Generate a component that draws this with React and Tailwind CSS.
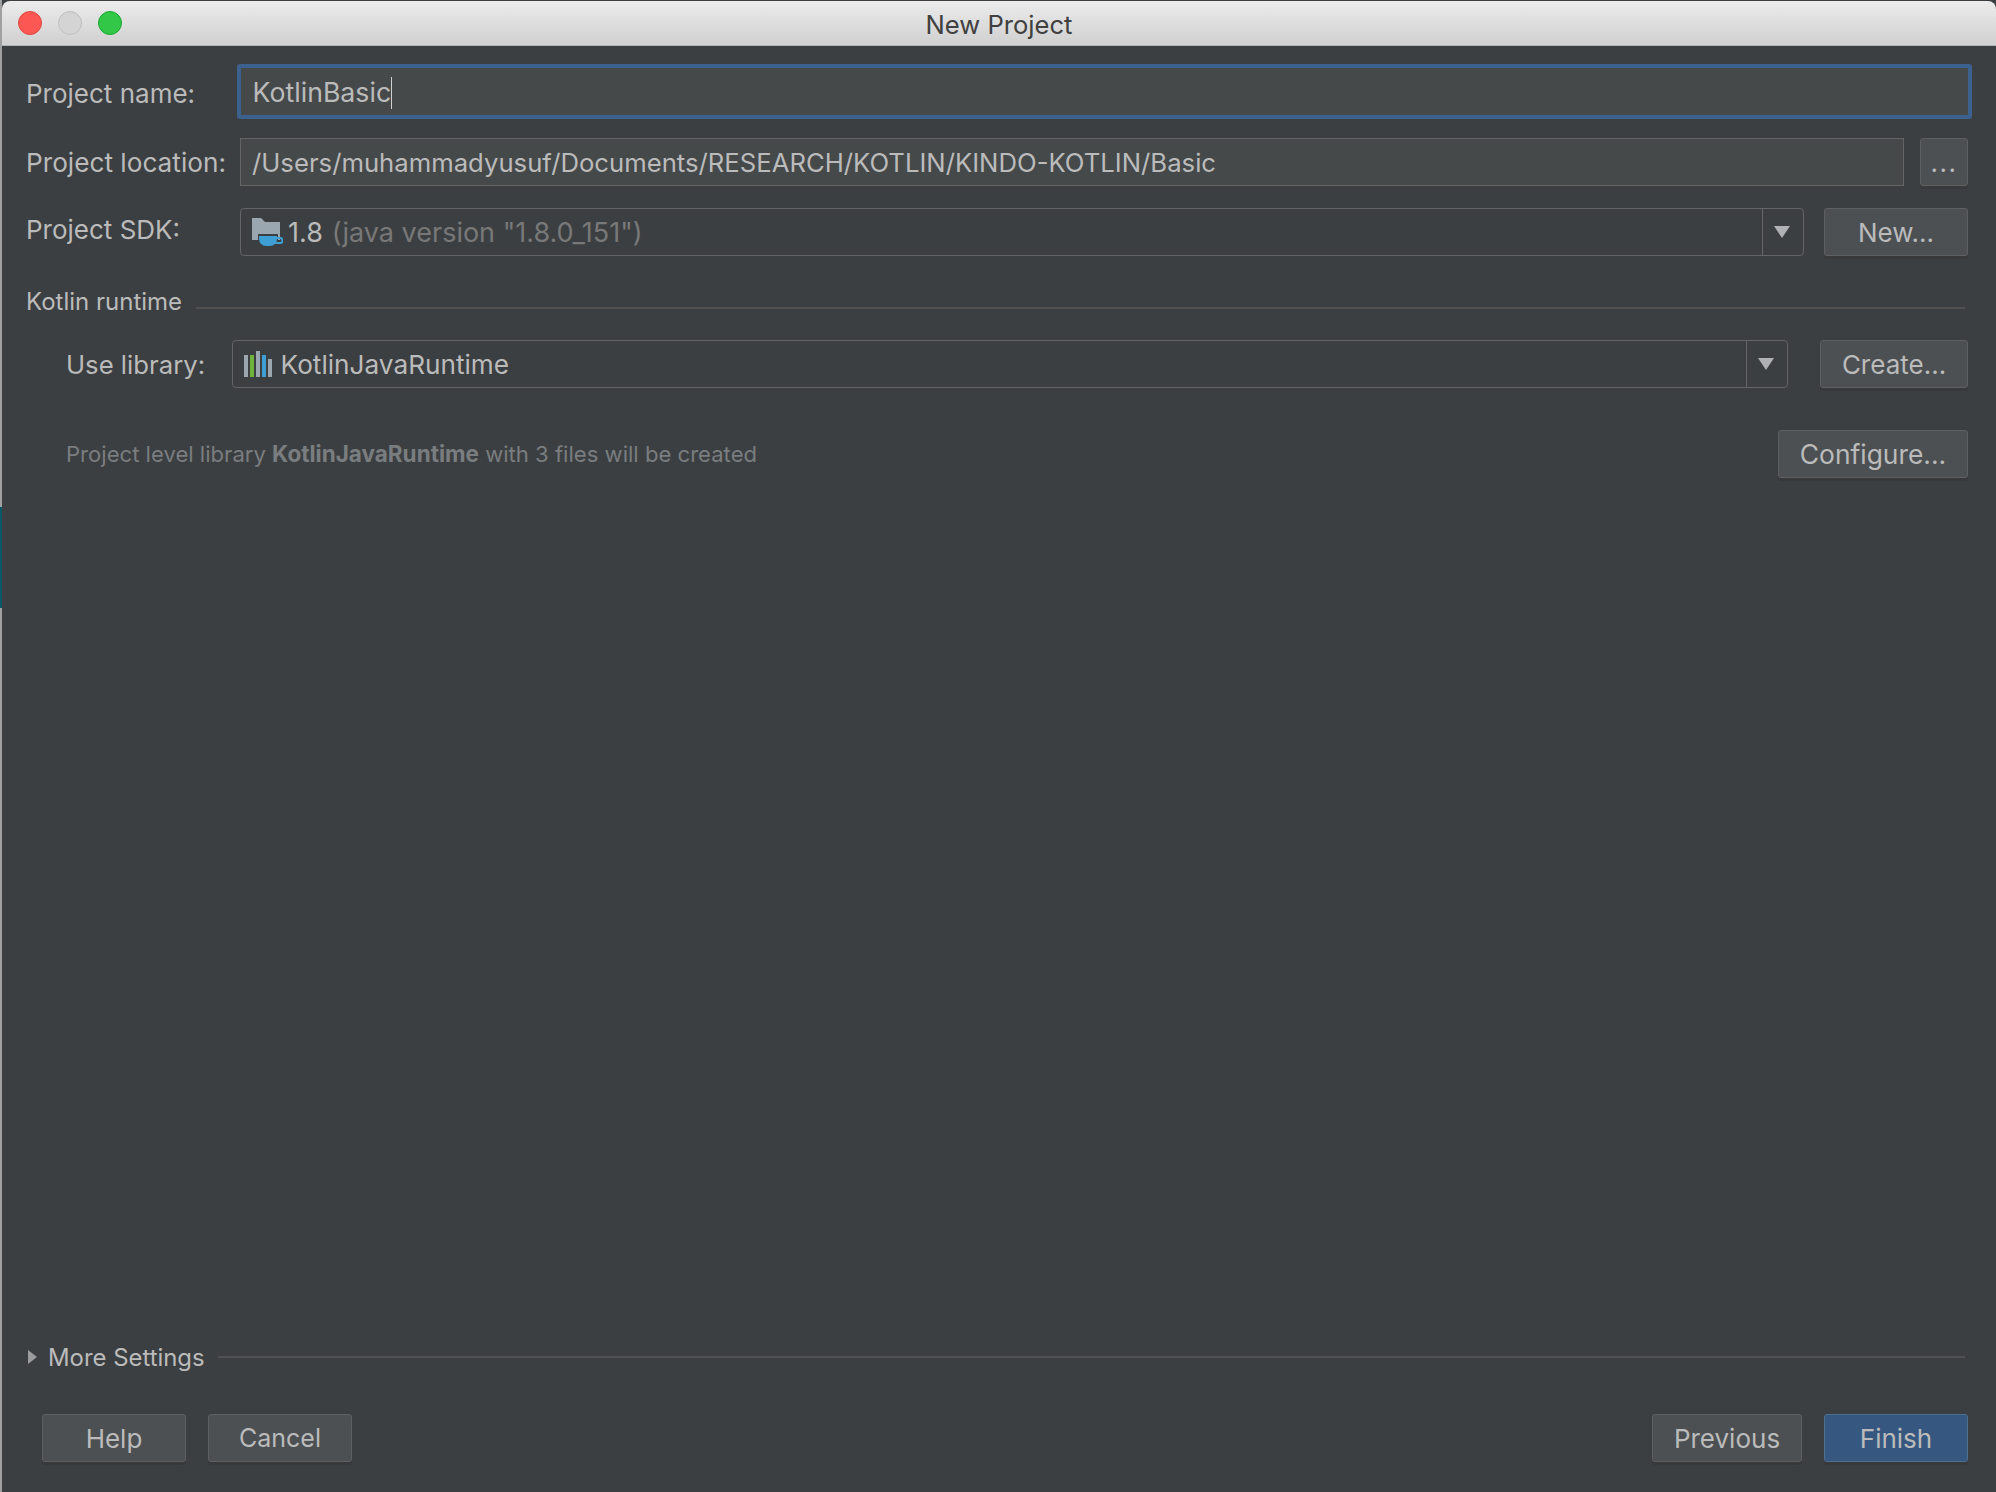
const Btn = ({ children, className = "", size = "text-[26px]" }) => (
  <button className={`h-[48px] shrink-0 rounded-[3px] border border-[#5e6060] bg-[#4c5052] pt-[1px] text-[#bbbbbb] shadow-[0_3px_0_#37393b] ${size} ${className}`}>
    {children}
  </button>
);

const Arrow = () => (
  <svg width="16" height="12" viewBox="0 0 16 12" className="mr-[2px]">
    <polygon points="0,0 16,0 8,12" fill="#afb1b3" />
  </svg>
);

const Combo = ({ children }) => (
  <div className="flex h-[48px] flex-1 items-center rounded-[4px] border border-[#646464]">
    <div className="flex flex-1 items-center">{children}</div>
    <div className="flex h-full w-[41px] items-center justify-center border-l border-[#646464]">
      <Arrow />
    </div>
  </div>
);

const JavaIcon = () => (
  <svg width="31" height="28" viewBox="0 0 31 28" className="ml-[11px] shrink-0">
    <path d="M0 0H9L13 4H28V22H0Z" fill="#9aa7b0" />
    <path d="M7 17H25V21A7 7 0 0 1 18 28H14A7 7 0 0 1 7 21Z" fill="#3d9fd3" stroke="#3c3f41" strokeWidth="2" />
    <path d="M7 18H25V21A7 7 0 0 1 18 28H14A7 7 0 0 1 7 21Z" fill="#3d9fd3" />
    <path d="M25 20H28A2 2 0 0 1 28 25H23" fill="none" stroke="#3d9fd3" strokeWidth="2" />
  </svg>
);

const LibraryIcon = () => (
  <svg width="28" height="26" viewBox="0 0 28 26" className="ml-[11px] shrink-0">
    <rect x="0" y="4" width="4" height="22" fill="#9aa7b0" />
    <rect x="6" y="4" width="4" height="22" fill="#6eb43c" />
    <rect x="12" y="0" width="4" height="26" fill="#9aa7b0" />
    <rect x="18" y="4" width="4" height="22" fill="#3d9fd3" />
    <rect x="24" y="8" width="4" height="18" fill="#9aa7b0" />
  </svg>
);

const Light = ({ className }) => <div className={`h-[24px] w-[24px] rounded-full border ${className}`} />;

export default function App() {
  return (
    <div className="flex h-[1492px] w-[1996px] overflow-hidden bg-[#3c3f41] font-['Inter',sans-serif]">
      {/* left edge of the window behind */}
      <div className="flex w-[2px] flex-col bg-[#a0a0a0]">
        <div className="h-[507px]" />
        <div className="h-[101px] bg-[#0b5666]" />
      </div>

      <div className="flex flex-1 flex-col">
        <div className="mt-[1px] grid h-[45px] grid-cols-[1fr_auto_1fr] items-center rounded-t-[8px] border-b border-[#b4b4b4] bg-gradient-to-b from-[#ececec] to-[#d0d0d0]">
          <div className="flex gap-[16px] pl-[16px]">
            <Light className="border-[#e2463f] bg-[#fc5753]" />
            <Light className="border-[#c0c0c0] bg-[#d4d4d4]" />
            <Light className="border-[#17a92e] bg-[#33c748]" />
          </div>
          <div className="pt-[4px] text-[25.6px] text-[#404040]">New Project</div>
          <div />
        </div>

        <div className="flex flex-1 flex-col pb-[30px] pl-[24px] pr-[24px] pt-[18px]">
          <div className="flex h-[55px] items-center">
            <div className="w-[210.6px] pt-[3px] text-[26px] text-[#bbbbbb]">Project name:</div>
            <div className="flex h-full flex-1 items-center rounded-[3px] border-[4px] border-[#3d618e] bg-[#45494a] pl-[12px] pt-[2px] text-[26.7px] text-[#bbbbbb]">
              KotlinBasic
              <div className="h-[32px] w-[1px] bg-[#d0d0d0]" />
            </div>
          </div>

          <div className="mr-[4px] mt-[19px] flex h-[48px] items-center">
            <div className="w-[214px] pt-[1px] text-[26.2px] text-[#bbbbbb]">Project location:</div>
            <div className="flex h-[48px] flex-1 items-center border border-[#646464] bg-[#45494a] pl-[11px] pt-[2px] text-[25.7px] text-[#bbbbbb]">
              /Users/muhammadyusuf/Documents/RESEARCH/KOTLIN/KINDO-KOTLIN/Basic
            </div>
            <Btn className="ml-[16px] w-[48px] tracking-[1.5px]">...</Btn>
          </div>

          <div className="mr-[4px] mt-[22px] flex h-[48px] items-center">
            <div className="w-[214px] pb-[6px] text-[26px] text-[#bbbbbb]">Project SDK:</div>
            <Combo>
              <JavaIcon />
              <span className="ml-[5px] pt-[3px] text-[27px] text-[#bbbbbb]">1.8</span>
              <span className="ml-[9px] pt-[3px] text-[27px] text-[#787878]">(java version "1.8.0_151")</span>
            </Combo>
            <Btn className="ml-[20px] w-[144px]">New...</Btn>
          </div>

          <div className="mr-[7px] mt-[31px] flex h-[30px] items-center">
            <span className="text-[24px] text-[#bbbbbb]">Kotlin runtime</span>
            <div className="ml-[14px] mt-[12px] h-[2px] flex-1 bg-[#515151]" />
          </div>

          <div className="mr-[4px] mt-[23px] flex h-[48px] items-center pl-[40px]">
            <div className="w-[165.6px] pt-[2px] text-[25.7px] text-[#bbbbbb]">Use library:</div>
            <Combo>
              <LibraryIcon />
              <span className="ml-[9px] pt-[2px] text-[26.2px] text-[#bbbbbb]">KotlinJavaRuntime</span>
            </Combo>
            <Btn className="ml-[32px] w-[148px]">Create...</Btn>
          </div>

          <div className="mr-[4px] mt-[42px] flex h-[48px] items-center justify-between pl-[40px]">
            <div className="text-[22.1px] text-[#7a7d7f]">
              Project level library <b className="text-[22.5px] font-bold">KotlinJavaRuntime</b> with 3 files will be created
            </div>
            <Btn className="w-[190px]" size="text-[26.4px]">Configure...</Btn>
          </div>

          <div className="flex-1" />

          <div className="mr-[7px] flex h-[30px] items-center">
            <svg width="9" height="14" viewBox="0 0 9 14" className="ml-[2px]">
              <polygon points="0,0 9,7 0,14" fill="#9a9c9e" />
            </svg>
            <span className="ml-[11px] pt-[2px] text-[23.9px] text-[#bbbbbb]">More Settings</span>
            <div className="ml-[13px] h-[2px] flex-1 bg-[#515151]" />
          </div>

          <div className="mr-[4px] mt-[42px] flex items-center gap-[22px] pl-[16px]">
            <Btn className="w-[144px]">Help</Btn>
            <Btn className="w-[144px]" size="text-[25px]">Cancel</Btn>
            <div className="flex-1" />
            <Btn className="w-[150px]">Previous</Btn>
            <button className="h-[48px] w-[144px] shrink-0 rounded-[3px] border border-[#4c708c] bg-[#365880] pt-[1px] text-[26px] text-[#bbbbbb] shadow-[0_3px_0_#37393b]">
              Finish
            </button>
          </div>
        </div>
      </div>
    </div>
  );
}
